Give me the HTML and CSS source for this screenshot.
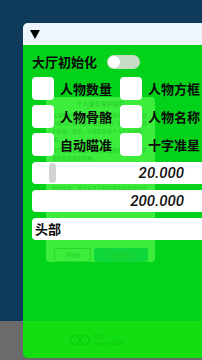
FILE: index.html
```html
<!DOCTYPE html>
<html lang="zh">
<head>
    <meta charset="UTF-8">
    <meta name="viewport" content="width=device-width, initial-scale=1.0">
    <title>菜单</title>
    <link rel="stylesheet" href="styles.css">
</head>
<body>
    <div class="panel">
        <div class="panel-head">
            <span class="arrow"></span>
        </div>
        <div class="panel-body">
            <!-- 后面透出来的弹窗 -->
            <div class="ghost-dialog">
                <div class="ghost-title">个人信息保护指引</div>
                <p class="ghost-text">欢迎您使用腾讯游戏！我们将通过《隐私保护指引》和《软件服务协议》帮助您了解我们收集、使用、存储和共享个人信息的情况。</p>
                <p class="ghost-text">为了创建游戏账号，识别设备信息，我们需要获取必要的权限。</p>
                <p class="ghost-text">您可以在游戏内查看完整的指引内容后再做决定。</p>
                <p class="ghost-text">如您同意，请点击下方按钮开始接受我们的服务。</p>
                <div class="ghost-btns">
                    <span class="ghost-btn">不同意</span>
                    <span class="ghost-btn main">同意并继续</span>
                </div>
            </div>
            <div class="ghost-footer">
                <span class="ghost-logo"><i></i><i></i></span>
                <span class="ghost-brand">腾讯<br><small>Tencent 腾讯游戏</small></span>
            </div>

            <div class="toggle-row">
                <span class="label">大厅初始化</span>
                <span class="toggle"><span class="knob"></span></span>
            </div>
            <div class="check-grid">
                <div class="check"><span class="box"></span><span class="label">人物数量</span></div>
                <div class="check"><span class="box"></span><span class="label">人物方框</span></div>
                <div class="check"><span class="box"></span><span class="label">人物骨骼</span></div>
                <div class="check"><span class="box"></span><span class="label">人物名称</span></div>
                <div class="check"><span class="box"></span><span class="label">自动瞄准</span></div>
                <div class="check"><span class="box"></span><span class="label">十字准星</span></div>
            </div>
            <div class="bars">
                <div class="bar slider">
                    <span class="thumb"></span>
                    <span class="value">20.000</span>
                </div>
                <div class="bar slider">
                    <span class="value">200.000</span>
                </div>
                <div class="bar select">
                    <span class="label">头部</span>
                </div>
            </div>
        </div>
    </div>
</body>
</html>
```

FILE: styles.css
```css
body {
    margin: 0;
    width: 202px;
    height: 360px;
    overflow: hidden;
    background: linear-gradient(#0e3a5c 0, #0e3a5c 321px, #6b6b6b 321px);
    font-family: "Noto Sans CJK SC", "Noto Sans", sans-serif;
}
.panel {
    margin: 23px 0 0 23px;
    width: 185px;
    height: 335px;
    border-radius: 5px;
    overflow: hidden;
    display: flex;
    flex-direction: column;
    background: #02d21a;
}
.panel-head {
    height: 22px;
    flex: none;
    background: #eef5fd;
    display: flex;
    align-items: center;
    padding-left: 7px;
}
.arrow {
    width: 0;
    height: 0;
    border-left: 5.5px solid transparent;
    border-right: 5.5px solid transparent;
    border-top: 9px solid #000;
}
.panel-body {
    position: relative;
    flex: 1;
    padding: 9px 0 0 9px;
}
.label {
    position: relative;
    font-size: 13px;
    font-weight: 700;
    line-height: 16px;
    color: #0a0a0a;
    white-space: nowrap;
}
.toggle-row {
    position: relative;
    display: flex;
    align-items: center;
    gap: 10px;
    height: 16px;
}
.toggle {
    width: 33px;
    height: 14px;
    border-radius: 7px;
    background: #c6dbc6;
    display: flex;
    align-items: center;
    padding-left: 1px;
    box-sizing: border-box;
}
.knob {
    width: 12px;
    height: 12px;
    border-radius: 50%;
    background: #fff;
}
.check-grid {
    position: relative;
    margin-top: 7px;
    display: grid;
    grid-template-columns: 88px 1fr;
    row-gap: 5px;
}
.check {
    display: flex;
    align-items: center;
    gap: 6px;
}
.box {
    width: 22px;
    height: 23px;
    border-radius: 4px;
    background: #fff;
}
.bars {
    position: relative;
    margin-top: 6px;
    display: flex;
    flex-direction: column;
    gap: 6px;
}
.bar {
    position: relative;
    height: 22px;
    border-radius: 4px 0 0 4px;
    background: #fff;
    display: flex;
    align-items: center;
}
.slider {
    justify-content: flex-end;
    padding-right: 24px;
}
.thumb {
    position: absolute;
    left: 17px;
    top: 1px;
    width: 7px;
    height: 20px;
    border-radius: 4px;
    background: #d2d2d2;
}
.value {
    font-family: Roboto, sans-serif;
    font-style: italic;
    font-weight: 500;
    font-size: 15px;
    color: #111;
}
.select {
    padding-left: 3px;
}

/* 背景里的弹窗，被绿色盖住 */
.ghost-dialog {
    position: absolute;
    left: 23px;
    top: 52px;
    width: 109px;
    height: 165px;
    box-sizing: border-box;
    padding: 2px 6px;
    border-radius: 4px;
    background: #3ced3c;
    color: #27c827;
}
.ghost-title {
    text-align: center;
    font-size: 6px;
    line-height: 9px;
}
.ghost-text {
    margin: 3px 0 0;
    font-size: 5px;
    line-height: 8px;
}
.ghost-btns {
    position: absolute;
    left: 8px;
    right: 7px;
    bottom: 0;
    display: flex;
    gap: 3px;
}
.ghost-btn {
    width: 35px;
    height: 12px;
    border: 1px solid #2ad82a;
    border-radius: 2px;
    font-size: 5px;
    line-height: 12px;
    text-align: center;
}
.ghost-btn.main {
    flex: 1;
    border-color: #10d83a;
    background: #10d83a;
}
.ghost-footer {
    position: absolute;
    left: 0;
    right: 0;
    top: 276px;
    bottom: 0;
    background: #12df12;
    display: flex;
    align-items: center;
    padding-left: 47px;
    gap: 4px;
    color: #0cc60c;
}
.ghost-logo {
    display: flex;
}
.ghost-logo i {
    width: 8px;
    height: 8px;
    border: 1px solid #0bc40b;
    border-radius: 50%;
}
.ghost-brand {
    font-size: 5px;
    line-height: 7px;
}
.ghost-brand small {
    font-size: 4px;
}
```
